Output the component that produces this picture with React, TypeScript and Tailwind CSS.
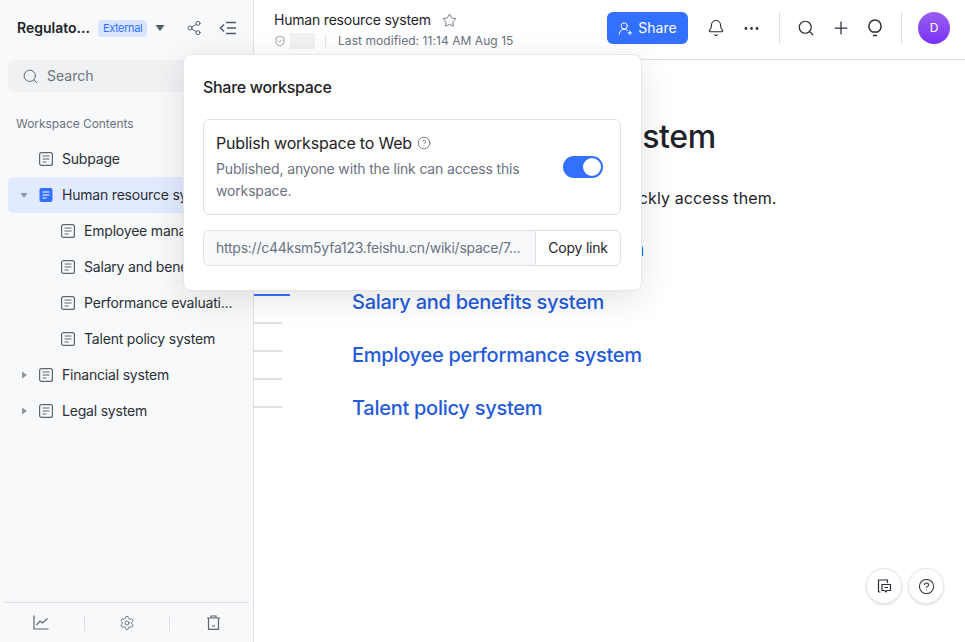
import { Bell, CircleHelp, Ellipsis, Plus, Search, Settings, Share2, ShieldCheck, Star, UserRoundPlus } from 'lucide-react';

function DocIcon({ active }: { active?: boolean }) {
  if (active) {
    return (
      <svg width="14" height="14" viewBox="0 0 14 14" className="shrink-0">
        <rect x="0.5" y="0" width="13" height="14" rx="2" fill="#3370ff" />
        <path d="M3.5 4h7M3.5 7h7M3.5 10h4" stroke="#fff" strokeWidth="1.2" />
      </svg>
    );
  }
  return (
    <svg width="14" height="14" viewBox="0 0 14 14" fill="none" className="shrink-0">
      <rect x="0.6" y="0.6" width="12.8" height="12.8" rx="2" stroke="#5f6670" strokeWidth="1.2" />
      <path d="M3.5 4h7M3.5 7h7M3.5 10h4" stroke="#5f6670" strokeWidth="1.2" />
    </svg>
  );
}

function Caret({ open }: { open?: boolean }) {
  return (
    <svg width="8" height="8" viewBox="0 0 8 8" className="shrink-0">
      {open ? <path d="M0.5 2h7L4 7z" fill="#8f959e" /> : <path d="M2 0.5v7L7 4z" fill="#8f959e" />}
    </svg>
  );
}

function TreeRow({ label, level = 0, caret, active }: { label: string; level?: number; caret?: 'open' | 'closed'; active?: boolean }) {
  return (
    <div className={`flex h-9 items-center rounded-md pl-3 ${active ? 'bg-[#e1eaff]' : ''}`}>
      <div className="flex w-[19px] shrink-0 items-center">
        {caret && <Caret open={caret === 'open'} />}
      </div>
      <div className={`shrink-0 ${level === 1 ? 'ml-[22px]' : ''}`}>
        <DocIcon active={active} />
      </div>
      <span className="ml-[9px] truncate text-sm tracking-[-0.2px] text-[#2b2f36]">{label}</span>
    </div>
  );
}

function Sidebar() {
  return (
    <aside className="flex h-full w-[254px] shrink-0 flex-col border-r border-[#dee0e3] bg-[#f8f9fa]">
      <div className="flex h-[56px] shrink-0 items-center pl-[17px]">
        <span className="text-sm font-semibold text-[#1f2329]">Regulato...</span>
        <span className="ml-2 rounded bg-[#d9e5ff] px-[5px] py-px text-[11px] leading-[15px] tracking-[-0.4px] text-[#3370ff]">External</span>
        <svg width="10" height="8" viewBox="0 0 10 8" className="ml-2">
          <path d="M0.5 1h9L5 7z" fill="#4e5969" />
        </svg>
        <Share2 size={16} strokeWidth={1.4} className="ml-[21px] text-[#4e5969]" />
        <svg width="18" height="14" viewBox="0 0 18 14" fill="none" stroke="#4e5969" strokeWidth="1.5" className="ml-[17px]">
          <path d="M5 3.5 1.5 7 5 10.5M7 1.5h10M8 7h9M7 12.5h10" />
        </svg>
      </div>
      <div className="mx-2 mt-1 flex h-8 shrink-0 items-center rounded-md bg-[#f0f1f3] pl-[14px]">
        <Search size={17} strokeWidth={1.4} className="text-[#5f6670]" />
        <span className="ml-2 text-sm text-[#6b7280]">Search</span>
      </div>
      <div className="mt-[24px] pl-4 text-xs leading-4 tracking-[-0.05px] text-[#6b7280]">Workspace Contents</div>
      <nav className="mt-[9px] flex flex-col px-2">
        <TreeRow label="Subpage" />
        <TreeRow label="Human resource system" caret="open" active />
        <TreeRow label="Employee management system" level={1} />
        <TreeRow label="Salary and benefits system" level={1} />
        <TreeRow label="Performance evaluati..." level={1} />
        <TreeRow label="Talent policy system" level={1} />
        <TreeRow label="Financial system" caret="closed" />
        <TreeRow label="Legal system" caret="closed" />
      </nav>
      <div className="mx-1 mt-auto flex h-[40px] items-center border-t border-[#dee0e3]">
        <div className="w-[80px] pl-[29px]">
          <svg width="16" height="15" viewBox="0 0 16 15" fill="none" stroke="#5f6670" strokeWidth="1.2">
            <path d="M1 0.5V14H15.5M3.5 10l3.5-4 2.5 2 5-4.5" />
          </svg>
        </div>
        <div className="h-4 w-px bg-[#dee0e3]" />
        <div className="flex w-[84px] justify-center">
          <Settings size={16} strokeWidth={1.3} className="text-[#5f6670]" />
        </div>
        <div className="h-4 w-px bg-[#dee0e3]" />
        <div className="pl-[36px]">
          <svg width="15" height="15" viewBox="0 0 15 15" fill="none" stroke="#5f6670" strokeWidth="1.2">
            <path d="M1 3h13M5 3V1h5v2M2.5 3v11.4h10V3M6 11h3" />
          </svg>
        </div>
      </div>
    </aside>
  );
}

function TopBar() {
  return (
    <header className="flex h-[60px] shrink-0 items-center border-b border-[#dee0e3] pr-[15px] pb-[3px] pl-5">
      <div className="mt-[3px] flex-1">
        <div className="flex items-center text-sm leading-5 tracking-[-0.2px] text-[#1f2329]">
          Human resource system
          <Star size={15} strokeWidth={1.3} className="ml-[11px] text-[#4e5969]" />
        </div>
        <div className="mt-[3px] flex h-4 items-center text-xs tracking-[0.06px] text-[#6b7280]">
          <ShieldCheck size={12} strokeWidth={1.4} />
          <div className="ml-[4px] h-4 w-[25px] bg-[#f1f2f3]" />
          <div className="ml-[10px] h-3 w-px bg-[#dee0e3]" />
          <span className="ml-3">Last modified: 11:14 AM Aug 15</span>
        </div>
      </div>
      <button className="flex h-8 w-[81px] items-center justify-center gap-[5px] rounded-md bg-[#3370ff] text-sm text-white">
        <UserRoundPlus size={15} strokeWidth={1.5} />
        Share
      </button>
      <Bell size={18} strokeWidth={1.5} className="ml-[19px] text-[#2b2f36]" />
      <Ellipsis size={19} strokeWidth={1.6} className="ml-[17px] text-[#2b2f36]" />
      <div className="ml-[18px] h-8 w-px bg-[#dee0e3]" />
      <Search size={18} strokeWidth={1.6} className="ml-[17px] text-[#2b2f36]" />
      <Plus size={20} strokeWidth={1.5} className="ml-[16px] text-[#2b2f36]" />
      <svg width="14" height="18" viewBox="0 0 14 18" fill="none" stroke="#2b2f36" strokeWidth="1.5" className="ml-[17px]">
        <path d="M4.5 13C2.4 11.9 0.9 10 0.9 7.2a6.1 6.2 0 0 1 12.2 0c0 2.8-1.5 4.7-3.6 5.8zM5 16.6h4" />
      </svg>
      <div className="ml-[19px] h-8 w-px bg-[#dee0e3]" />
      <div className="ml-4 flex size-8 items-center justify-center rounded-full bg-linear-to-b from-[#9a5cf0] to-[#7a2ff5] text-xs text-white">D</div>
    </header>
  );
}

function SharePopover() {
  return (
    <div className="absolute top-[54px] left-[183px] z-10 h-[237px] w-[459px] rounded-lg border border-[#e5e6e8] bg-white pt-[22px] pr-5 pl-[19px] shadow-[0_8px_32px_rgba(31,35,41,0.12)]">
      <div className="text-base leading-5 font-medium tracking-[-0.3px] text-[#1f2329]">Share workspace</div>
      <div className="mt-[22px] flex h-[96px] items-center rounded-md border border-[#dee0e3] pr-[17px] pl-3">
        <div className="flex-1 pb-px">
          <div className="flex items-center text-base leading-6 tracking-[-0.2px] text-[#1f2329]">
            Publish workspace to Web
            <CircleHelp size={14} strokeWidth={1.4} className="ml-[5px] text-[#5f6670]" />
          </div>
          <p className="mt-[3px] w-[320px] text-sm leading-[22px] tracking-[-0.16px] text-[#6b7280]">Published, anyone with the link can access this workspace.</p>
        </div>
        <div className="flex h-[22px] w-10 items-center justify-end rounded-full bg-[#3370ff] pr-[2px]">
          <div className="size-[18px] rounded-full bg-white" />
        </div>
      </div>
      <div className="mt-[15px] flex h-9 items-center overflow-hidden rounded-md border border-[#dee0e3]">
        <div className="flex h-full flex-1 items-center truncate bg-[#f8f9fa] pl-3 text-sm tracking-[-0.25px] text-[#6b7280]">https://c44ksm5yfa123.feishu.cn/wiki/space/7...</div>
        <div className="flex h-full w-[85px] items-center justify-center border-l border-[#dee0e3] text-sm tracking-[-0.2px] text-[#1f2329]">Copy link</div>
      </div>
    </div>
  );
}

function DocBody() {
  const rules = ['w-9 bg-[#3370ff]', 'w-7 bg-[#dee0e3]', 'w-7 bg-[#dee0e3]', 'w-7 bg-[#dee0e3]', 'w-7 bg-[#dee0e3]'];
  const links = ['Employee management section', 'Salary and benefits system', 'Employee performance system', 'Talent policy system'];
  return (
    <div className="flex min-h-0 flex-1">
      <div className="flex w-[98px] shrink-0 flex-col gap-[26px] pt-[234px]">
        {rules.map((r, i) => (
          <div key={i} className={`h-0.5 ${r}`} />
        ))}
      </div>
      <div className="pt-[55px]">
        <h1 className="text-[32px] leading-[44px] font-medium tracking-[-0.4px] whitespace-nowrap text-[#1f2329]">Human resource system</h1>
        <p className="mt-[27px] text-base leading-6 tracking-[0.1px] whitespace-nowrap text-[#1f2329]">Click the links below, and you can quickly access them.</p>
        <div className="mt-[23px] flex flex-col gap-[21px]">
          {links.map((l) => (
            <div key={l} className="text-xl leading-8 font-medium tracking-[-0.27px] whitespace-nowrap text-[#245bdb]">{l}</div>
          ))}
        </div>
      </div>
    </div>
  );
}

export default function App() {
  return (
    <div className="relative flex h-[642px] w-[965px] overflow-hidden bg-white font-['Inter','Noto_Sans',sans-serif]">
      <Sidebar />
      <main className="flex min-w-0 flex-1 flex-col">
        <TopBar />
        <DocBody />
      </main>
      <SharePopover />
      <div className="absolute right-[21px] bottom-[38px] flex gap-1.5">
        <div className="flex size-9 items-center justify-center rounded-full border border-[#e5e6e8] bg-white shadow-sm">
          <svg width="16" height="16" viewBox="0 0 16 16" fill="none" stroke="#2b2f36" strokeWidth="1.2">
            <path d="M2.5 14V2h9v3M2.5 14h2" />
            <path d="M6 6.5h8.5v6H11l-1 1.5-1-1.5H6zM8.5 9.5h3.5" />
          </svg>
        </div>
        <div className="flex size-9 items-center justify-center rounded-full border border-[#e5e6e8] bg-white shadow-sm">
          <CircleHelp size={17} strokeWidth={1.5} className="text-[#2b2f36]" />
        </div>
      </div>
    </div>
  );
}
